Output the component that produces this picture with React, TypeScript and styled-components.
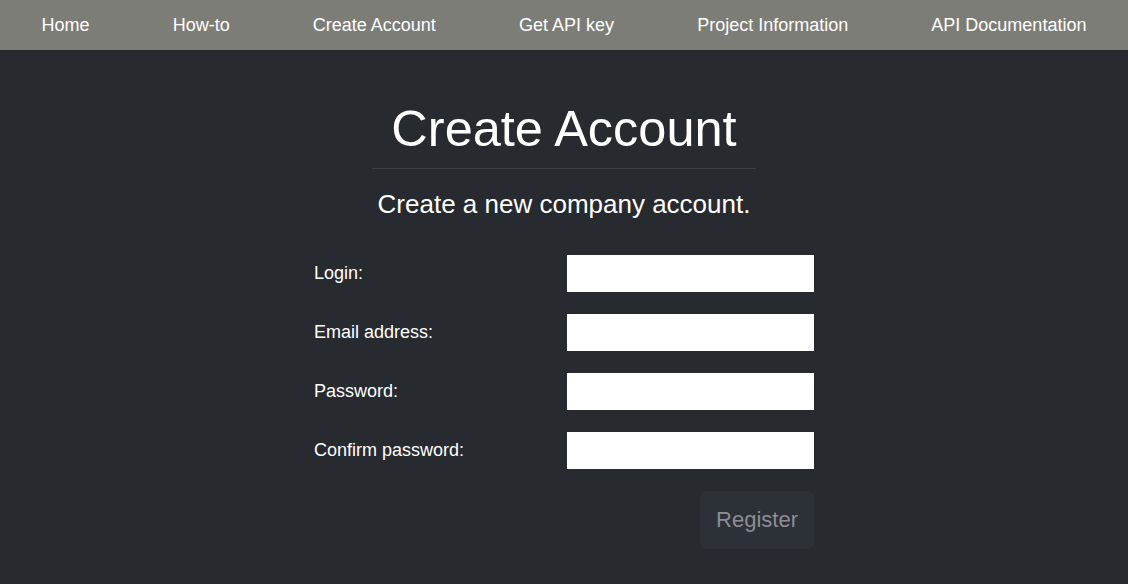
import React from "react";
import styled, { createGlobalStyle } from "styled-components";

const Global = createGlobalStyle`
  html, body { margin: 0; padding: 0; background: #272a2f; }
  body { font-family: "Liberation Sans", Arial, sans-serif; color: #fff; }
  * { box-sizing: border-box; }
`;

const Page = styled.div`
  min-height: 584px;
  background: #272a2f;
`;

const Nav = styled.nav`
  height: 50px;
  background: #7d7d78;
  display: flex;
  justify-content: space-around;
  align-items: center;
`;

const NavLink = styled.a`
  color: #fff;
  font-size: 18px;
  text-decoration: none;
  padding-top: 1px;
`;

const Main = styled.main`
  display: flex;
  flex-direction: column;
  align-items: center;
  padding-top: 49px;
`;

const Title = styled.h1`
  margin: 0;
  width: 384px;
  text-align: center;
  font-size: 50.5px;
  font-weight: 400;
  line-height: 60px;
  padding-bottom: 9px;
  border-bottom: 1px solid #3b3e43;
`;

const Subtitle = styled.p`
  margin: 18px 0 0;
  font-size: 26px;
  line-height: 34px;
`;

const Form = styled.form`
  width: 500px;
  margin-top: 34px;
  display: flex;
  flex-direction: column;
  gap: 22px;
`;

const Row = styled.div`
  display: grid;
  grid-template-columns: 253px 247px;
  align-items: center;
`;

const Label = styled.label`
  font-size: 18px;
  line-height: 22px;
  padding-bottom: 2px;
`;

const Input = styled.input`
  height: 37px;
  width: 247px;
  border: none;
  background: #fff;
  outline: none;
`;

const Actions = styled.div`
  display: flex;
  justify-content: flex-end;
`;

const Button = styled.button`
  width: 114px;
  height: 58px;
  border: none;
  border-radius: 6px;
  background: #2c3037;
  color: #8b8e92;
  font-family: "Liberation Sans", Arial, sans-serif;
  font-size: 22px;
`;

const links = ["Home", "How-to", "Create Account", "Get API key", "Project Information", "API Documentation"];
const fields = [
  { label: "Login:", type: "text" },
  { label: "Email address:", type: "email" },
  { label: "Password:", type: "password" },
  { label: "Confirm password:", type: "password" },
];

export default function App() {
  return (
    <Page>
      <Global />
      <Nav>
        {links.map((l) => (
          <NavLink key={l} href="#">{l}</NavLink>
        ))}
      </Nav>
      <Main>
        <Title>Create Account</Title>
        <Subtitle>Create a new company account.</Subtitle>
        <Form onSubmit={(e) => e.preventDefault()}>
          {fields.map((f) => (
            <Row key={f.label}>
              <Label>{f.label}</Label>
              <Input type={f.type} />
            </Row>
          ))}
          <Actions>
            <Button type="submit">Register</Button>
          </Actions>
        </Form>
      </Main>
    </Page>
  );
}
